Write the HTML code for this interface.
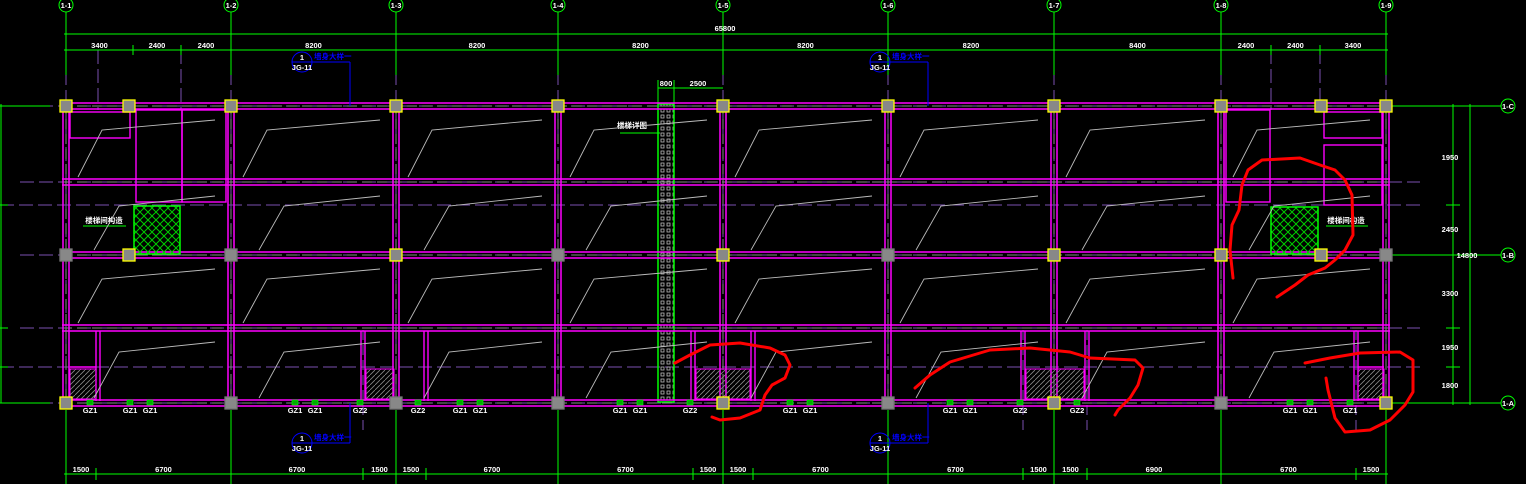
<!DOCTYPE html><html><head><meta charset="utf-8"><style>html,body{margin:0;padding:0;background:#000;overflow:hidden}svg{display:block}text{font-family:"Liberation Sans","Noto Sans CJK SC",sans-serif;font-size:7.5px;font-weight:bold;fill:#fff}</style></head><body>
<svg id="s" width="1526" height="484" viewBox="0 0 1526 484" xmlns="http://www.w3.org/2000/svg">
<defs>
<pattern id="hx" width="8" height="8" patternUnits="userSpaceOnUse"><path d="M0 0L8 8M8 0L0 8" stroke="#0c0" stroke-width="1"/></pattern>
<pattern id="hd" width="5" height="5" patternUnits="userSpaceOnUse"><path d="M0 5L5 0" stroke="#888" stroke-width="0.8"/></pattern>
<pattern id="br" width="6" height="6" patternUnits="userSpaceOnUse"><rect x="1" y="1" width="3" height="3" fill="none" stroke="#bbb" stroke-width="0.8"/></pattern>
</defs>
<g id="g"></g>
</svg>
<script>
const X=[66,231,396,558,723,888,1054,1221,1386];
const Y=[106,182,255,328,403];
let h='';
const L=(x1,y1,x2,y2,c,w,d)=>h+=`<line x1="${x1}" y1="${y1}" x2="${x2}" y2="${y2}" stroke="${c}" stroke-width="${w||1}"${d?` stroke-dasharray="${d}"`:''}/>`;
const T=(x,y,t,a,c)=>h+=`<text x="${x}" y="${y}" text-anchor="${a||'middle'}"${c?` style="fill:${c}"`:''}>${t}</text>`;
X.forEach(x=>L(x,14,x,440,'#7a4fb0',1,'14 5'));
[205,367].forEach(y=>L(0,y,1420,y,'#7a4fb0',1,'14 5'));
Y.forEach(y=>L(20,y,1420,y,'#7a4fb0',1,'14 5'));
[98,181,1271,1320].forEach(x=>L(x,50,x,110,'#7a4fb0',1,'14 5'));
[363,1023,1087,1356].forEach(x=>L(x,330,x,430,'#7a4fb0',1,'10 5'));
X.forEach((x,i)=>{h+=`<circle cx="${x}" cy="5" r="7" fill="none" stroke="#0f0"/>`;T(x,8,'1-'+(i+1));L(x,12,x,75,'#0f0');L(x,410,x,484,'#0f0')});
L(64,34,1388,34,'#0f0');L(64,50,1388,50,'#0f0');T(725,31,'65800');
const td=[[66,133,'3400'],[133,181,'2400'],[181,231,'2400'],[231,396,'8200'],[396,558,'8200'],[558,723,'8200'],[723,888,'8200'],[888,1054,'8200'],[1054,1221,'8400'],[1221,1271,'2400'],[1271,1320,'2400'],[1320,1386,'3400']];
td.forEach(d=>{T((d[0]+d[1])/2,48,d[2]);L(d[1],45,d[1],55,'#0f0')});
L(64,474,1388,474,'#0f0');
const bd=[[66,96,'1500'],[96,231,'6700'],[231,363,'6700'],[363,396,'1500'],[396,426,'1500'],[426,558,'6700'],[558,693,'6700'],[693,723,'1500'],[723,753,'1500'],[753,888,'6700'],[888,1023,'6700'],[1023,1054,'1500'],[1054,1087,'1500'],[1087,1221,'6900'],[1221,1356,'6700'],[1356,1386,'1500']];
bd.forEach(d=>{T((d[0]+d[1])/2,472,d[2]);L(d[1],468,d[1],480,'#0f0')});
[[106,'1-C'],[255,'1-B'],[403,'1-A']].forEach(r=>{h+=`<circle cx="1508" cy="${r[0]}" r="7" fill="none" stroke="#0f0"/>`;T(1508,r[0]+3,r[1]);L(1390,r[0],1501,r[0],'#0f0')});
L(1453,104,1453,405,'#0f0');L(1470,104,1470,405,'#0f0');
[205,328,367].forEach(y=>L(1446,y,1460,y,'#0f0'));
T(1450,160,'1950');T(1450,232,'2450');T(1450,296,'3300');T(1450,350,'1950');T(1450,388,'1800');T(1467,258,'14800');
L(1,104,1,403,'#0f0');L(0,106,50,106,'#0f0');L(0,403,50,403,'#0f0');[205,328,367].forEach(y=>L(0,y,8,y,'#0f0'));
h+=`<rect x="658" y="104" width="16" height="298" fill="url(#br)" stroke="#0f0" stroke-width="1.5"/>`;
L(658,80,658,104,'#0f0');L(674,80,674,104,'#0f0');L(658,88,723,88,'#0f0');T(666,86,'800');T(698,86,'2500');
L(620,133,660,133,'#0f0');T(632,128,'楼梯详图');
const M='#ff00ff';
Y.forEach(y=>{L(62,y-3,1390,y-3,M,1.5);L(62,y+3,1390,y+3,M,1.5);L(62,y,1390,y,'#888',1,'10 5')});
X.forEach(x=>{L(x-3,104,x-3,403,M,1.5);L(x+3,104,x+3,403,M,1.5);L(x,104,x,403,'#888',1,'10 5')});
const R=(x,y,w,hh)=>h+=`<rect x="${x}" y="${y}" width="${w}" height="${hh}" fill="none" stroke="${M}" stroke-width="1.4"/>`;
R(70,112,60,26);R(136,110,46,92);R(182,110,44,92);R(1226,110,44,92);R(1324,112,58,26);R(1324,145,58,60);
[98,363,426,693,753,1023,1087,1356].forEach(x=>{L(x-2,331,x-2,401,M,1.4);L(x+2,331,x+2,401,M,1.4)});
L(70,367,96,367,M,1.4);L(1358,367,1384,367,M,1.4);
[[70,369,26,30],[366,369,28,30],[696,369,54,30],[1026,369,58,30],[1358,369,26,30]].forEach(r=>h+=`<rect x="${r[0]}" y="${r[1]}" width="${r[2]}" height="${r[3]}" fill="url(#hd)" stroke="${M}"/>`);
h+=`<rect x="134" y="206" width="46" height="48" fill="url(#hx)" stroke="#0f0" stroke-width="1.5"/>`;
h+=`<rect x="1271" y="207" width="47" height="47" fill="url(#hx)" stroke="#0f0" stroke-width="1.5"/>`;
L(83,226,126,226,'#0f0');T(104,223,'楼梯间构造');L(1326,226,1368,226,'#0f0');T(1346,223,'楼梯间构造');
for(let i=0;i<8;i++)for(let j=0;j<4;j++){let xl=X[i]+8,xr=X[i+1]-8,yt=Y[j]+8,yb=Y[j+1]-5;h+=`<polyline points="${xl+(j%2?20:4)},${yb} ${xl+(j%2?45:28)},${yt+16} ${xr-8},${yt+6}" fill="none" stroke="#bbb" stroke-width="0.9"/>`}
const yel=[[0,0],[1,0],[2,0],[3,0],[4,0],[5,0],[6,0],[7,0],[8,0],[2,2],[4,2],[6,2],[7,2],[0,4],[4,4],[6,4],[8,4]];
X.forEach((x,i)=>[106,255,403].forEach((y,j)=>{let yl=yel.some(a=>a[0]==i&&a[1]==j*2);h+=`<rect x="${x-6}" y="${y-6}" width="12" height="12" fill="#888" stroke="${yl?'#ff0':'#777'}" stroke-width="1.3"/>`}));
[[129,106],[129,255],[1321,106],[1321,255]].forEach(p=>h+=`<rect x="${p[0]-6}" y="${p[1]-6}" width="12" height="12" fill="#888" stroke="#ff0" stroke-width="1.3"/>`);
[[90,'GZ1'],[130,'GZ1'],[150,'GZ1'],[295,'GZ1'],[315,'GZ1'],[360,'GZ2'],[418,'GZ2'],[460,'GZ1'],[480,'GZ1'],[620,'GZ1'],[640,'GZ1'],[690,'GZ2'],[790,'GZ1'],[810,'GZ1'],[950,'GZ1'],[970,'GZ1'],[1020,'GZ2'],[1077,'GZ2'],[1290,'GZ1'],[1310,'GZ1'],[1350,'GZ1']].forEach(g=>{T(g[0],413,g[1]);h+=`<rect x="${g[0]-3}" y="400" width="6" height="5" fill="#0a0" stroke="#0f0" stroke-width=".6"/>`});
[[302,62],[880,62],[302,443],[880,443]].forEach(c=>{h+=`<circle cx="${c[0]}" cy="${c[1]}" r="10" fill="none" stroke="#00f"/>`;L(c[0]-10,c[1],c[0]+48,c[1],'#00f');T(c[0],c[1]-2,'1');T(c[0],c[1]+8,'JG-11');T(c[0]+12,c[1]-3,'墙身大样一','start','#00f');let ty=c[1]<100?106:403;L(c[0]+48,c[1],c[0]+48,ty,'#00f')});
const RD=(d)=>h+=`<path d="${d}" fill="none" stroke="#f00" stroke-width="3" stroke-linejoin="round" stroke-linecap="round"/>`;
RD('M1233 278 L1230 250 L1232 225 L1239 210 L1242 185 L1248 170 L1262 160 L1300 158 L1320 165 L1335 170 L1345 180 L1352 195 L1353 235 L1345 250 L1335 260 L1325 268 L1308 275 L1295 285 L1277 297');
RD('M1305 363 L1330 358 L1360 353 L1400 352 L1413 360 L1413 392 L1405 405 L1390 420 L1370 430 L1345 432 L1335 418 L1328 390 L1326 378');
RD('M675 363 L690 355 L710 345 L740 343 L770 348 L785 355 L790 365 L785 378 L772 385 L765 395 L760 410 L740 418 L720 420 L712 417');
RD('M915 388 L930 375 L950 362 L990 350 L1030 348 L1070 352 L1090 358 L1135 360 L1143 368 L1138 385 L1130 398 L1118 410 L1115 415');
document.getElementById('g').innerHTML=h;
</script>
</body></html>
